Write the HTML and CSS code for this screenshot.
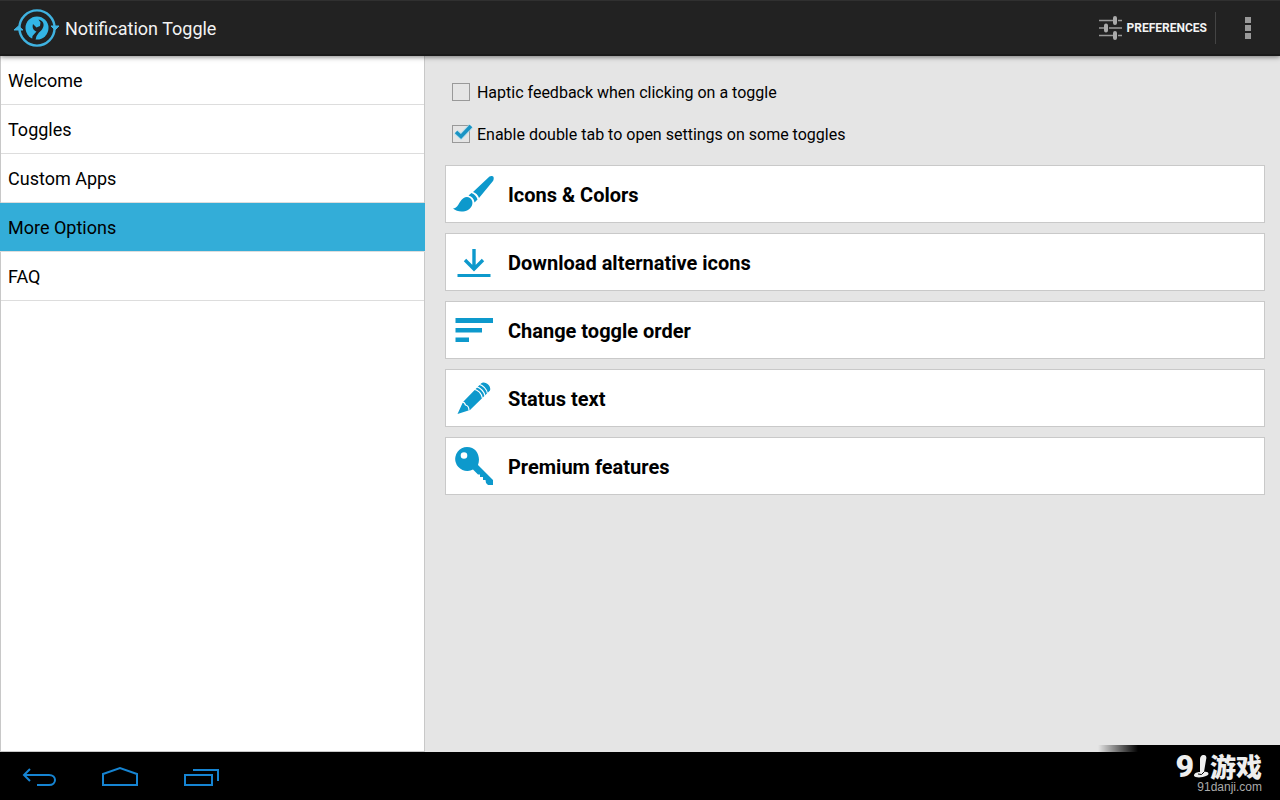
FILE: index.html
```html
<!DOCTYPE html>
<html lang="en">
<head>
<meta charset="utf-8">
<meta name="viewport" content="width=device-width, initial-scale=1">
<title>Notification Toggle</title>
<link rel="stylesheet" href="styles.css">
</head>
<body>
<header class="action-bar">
  <svg class="logo" viewBox="0 0 48 40" aria-hidden="true">
    <circle cx="24" cy="20" r="17.600" fill="none" stroke="#3fb2e0" stroke-width="2.400"/>
    <path d="M1 22L5.500 18L10 22ZM38 18H46L42 22Z" fill="#3fb2e0" stroke="#3fb2e0"/>
    <circle cx="24" cy="20" r="11.500" fill="#33b5e5"/>
    <path d="M19 32L19.500 28L23.500 23.500C20 22 19 19.500 20 16L23.500 19.500L27 18L27.500 14.500L25.500 11.500C30 12.500 31.500 16 30 19.500C29 22 27.500 23 26 24.500L23.500 28L22.500 32Z" fill="#222"/>
  </svg>
  <h1 class="title">Notification Toggle</h1>
  <button class="preferences" type="button">
    <svg class="sliders" viewBox="0 0 24 24" aria-hidden="true">
      <path d="M0 4.500H14M19 4.500H23M0 12H5M10 12H23M0 19.500H14M19 19.500H23" stroke="#999" stroke-width="1.300"/>
      <path d="M16 2V7M7 9.500V14.500M16 17V22" stroke="#aaa" stroke-width="4" stroke-linecap="round"/>
    </svg>
    <span>PREFERENCES</span>
  </button>
  <button class="overflow" type="button" aria-label="More">
    <svg class="dots" viewBox="0 0 6 22" aria-hidden="true"><path d="M0 0H6V6H0ZM0 8H6V14H0ZM0 16H6V22H0Z" fill="#999"/></svg>
  </button>
</header>

<div class="content">
  <nav class="sidebar">
    <a class="item" href="#welcome">Welcome</a>
    <a class="item" href="#toggles">Toggles</a>
    <a class="item" href="#apps">Custom Apps</a>
    <a class="item selected" href="#options" aria-current="page">More Options</a>
    <a class="item" href="#faq">FAQ</a>
  </nav>
  <main class="options">
    <div class="checks">
      <label class="check"><input class="box" type="checkbox"><span>Haptic feedback when clicking on a toggle</span></label>
      <label class="check"><input class="box" type="checkbox" checked><svg class="tick" viewBox="0 0 20 18" aria-hidden="true"><path d="M3 8L8 12.500L18 2" fill="none" stroke="#9cdcf0" stroke-width="5.500" opacity=".6"/><path d="M3 8L8 12.500L18 2" fill="none" stroke="#1a94c4" stroke-width="3.600"/></svg><span>Enable double tab to open settings on some toggles</span></label>
    </div>
    <div class="cards">
      <button class="card" type="button">
        <svg class="icon" viewBox="0 0 44 44" aria-hidden="true"><g fill="#0d99cc"><path d="M1 36.500C5 36 6 33 8 30C11 25 15 24 18 26C22 29 21 35 16 38C11 40.500 5 40 1 36.500Z"/><path d="M16.500 23.500L19.500 21C23 22.500 25 25 25.500 27.500L22.500 30.500C22 27 20 24.500 16.500 23.500Z"/><path d="M21 20L37.500 4.500C39 3.500 41 4 41.500 5C42 6.500 41.500 8 41 9L27 26C26 23 24 21 21 20Z"/></g></svg>
        <span class="label">Icons &amp; Colors</span>
      </button>
      <button class="card" type="button">
        <svg class="icon" viewBox="0 0 44 44" aria-hidden="true"><path d="M22 9V28M13 20L22 29L31 20" fill="none" stroke="#0d99cc" stroke-width="3.400"/><path d="M5.500 34H38.500V37H5.500Z" fill="#0d99cc"/></svg>
        <span class="label">Download alternative icons</span>
      </button>
      <button class="card" type="button">
        <svg class="icon" viewBox="0 0 44 44" aria-hidden="true"><path d="M3.500 10H41V15H3.500ZM3.500 20H30V24.500H3.500ZM3.500 29.500H17V34H3.500Z" fill="#0d99cc"/></svg>
        <span class="label">Change toggle order</span>
      </button>
      <button class="card" type="button">
        <svg class="icon" viewBox="0 0 44 44" aria-hidden="true"><path d="M5.500 38L11 26L29 7.500C32 4 40 9.500 38 14.500L18 34Z" fill="#0d99cc"/><path d="M10 26C12 26 13 27 13.500 29C15.500 29.500 17 31 17 34.500M21.500 13C26 14 29.500 17.500 30.500 22.500M24 10.500C28.500 12 32 15 33 20M26.500 8C31 9.500 34.500 12.500 35.500 17.500" fill="none" stroke="#fff" stroke-width="1.200"/></svg>
        <span class="label">Status text</span>
      </button>
      <button class="card" type="button">
        <svg class="icon" viewBox="0 0 44 44" aria-hidden="true"><path fill-rule="evenodd" d="M15 3A12 12 0 1 0 21 25.500L26 30.500H28V33H31V36H33.500L34 39L36 41H41V36L26 21C29 13 25 3 15 3ZM12 8.200A3.300 3.300 0 1 1 12 14.800A3.300 3.300 0 0 1 12 8.200Z" fill="#0d99cc"/></svg>
        <span class="label">Premium features</span>
      </button>
    </div>
  </main>
</div>

<footer class="system-bar">
  <button class="nav-button" type="button" aria-label="Back"><svg class="nav-icon" viewBox="0 0 40 24"><path d="M11 3L5 9L11 15M5 9H30C38 9 38 19 30 19H18"/></svg></button>
  <button class="nav-button" type="button" aria-label="Home"><svg class="nav-icon" viewBox="0 0 40 24"><path d="M3 19V8L20 2L37 8V19Z"/></svg></button>
  <button class="nav-button" type="button" aria-label="Recent apps"><svg class="nav-icon" viewBox="0 0 40 24"><path d="M4 9H31V19H4ZM12 4H37V15"/></svg></button>
  <div class="brand">
    <div class="brand-name"><span class="nine">9</span><svg class="pin" viewBox="0 0 16 24" aria-hidden="true"><path d="M10 1C12 1 13 3 12 6L10 18C15 17 16 21 12 22C8 24 -1 24 0 21C1 18 5 18 6 18L6 6C6 3 7 1 10 1Z" fill="#eee"/><path d="M4 20Q8 22 10 18" fill="none" stroke="#000"/></svg><span class="brand-cn" lang="zh">游戏</span></div>
    <div class="brand-url">91danji.com</div>
  </div>
</footer>
</body>
</html>
```
FILE: styles.css
```css
* { box-sizing: border-box; }

body {
  margin: 0;
  min-height: 100vh;
  display: flex;
  flex-direction: column;
  background: #e5e5e5;
  color: #000;
  font-family: Roboto, "Liberation Sans", sans-serif;
}

button {
  margin: 0;
  padding: 0;
  border: 0;
  background: none;
  color: inherit;
  font-family: inherit;
  cursor: pointer;
}

svg { display: block; flex: none; }

.action-bar {
  position: relative;
  display: flex;
  align-items: center;
  height: 56px;
  padding-left: 13px;
  background: #222;
  border-top: 1px solid #303030;
  border-bottom: 2px solid #1a1a1a;
  box-shadow: 0 1px 5px rgba(0, 0, 0, .5);
  color: #f3f3f3;
}

.logo { width: 48px; height: 40px; }

.title {
  margin: 0 auto 0 4px;
  padding-top: 2px;
  font-size: 18px;
  font-weight: 400;
}

.preferences {
  display: flex;
  align-items: center;
  gap: 4px;
  height: 32px;
  padding-right: 8px;
  border-right: 1px solid #444;
  font-size: 12px;
  font-weight: 700;
}

.sliders { width: 24px; height: 24px; }

.overflow {
  display: flex;
  justify-content: center;
  align-items: center;
  width: 64px;
  height: 48px;
}

.dots { width: 6px; height: 22px; }

.content {
  flex: 1;
  display: grid;
  grid-template-columns: 33.2% 1fr;
}

.sidebar {
  background: #fff;
  border: 1px solid #c8c8c8;
  border-top: 0;
}

.item {
  display: block;
  height: 49px;
  padding-left: 7px;
  border-bottom: 1px solid #ddd;
  color: #000;
  font-size: 18px;
  line-height: 49px;
  text-decoration: none;
}

.selected {
  margin: 0 -1px;
  padding-left: 8px;
  background: #33add8;
  background-clip: padding-box;
}

.options { padding: 15px 15px 0 20px; }

.checks { padding-left: 7px; }

.check {
  position: relative;
  display: flex;
  align-items: center;
  gap: 7px;
  height: 42px;
  font-size: 16px;
}

.box {
  appearance: none;
  width: 18px;
  height: 18px;
  margin: 0;
  border: 1px solid #999;
}

.tick {
  position: absolute;
  left: 1px;
  top: 11px;
  width: 20px;
  height: 18px;
}

.cards {
  display: flex;
  flex-direction: column;
  gap: 10px;
  margin-top: 10px;
}

.card {
  display: flex;
  align-items: center;
  gap: 12px;
  width: 100%;
  height: 58px;
  padding: 0 6px;
  border: 1px solid #c9c9c9;
  background: #fff;
  font-size: 20px;
  font-weight: 700;
  text-align: left;
}

.label { padding-top: 2px; }

.icon { width: 44px; height: 44px; }

.system-bar {
  position: relative;
  display: flex;
  align-items: center;
  gap: 41px;
  height: 48px;
  padding-left: 19px;
  background: #000;
}

.system-bar::before {
  content: "";
  position: absolute;
  right: 0;
  bottom: 100%;
  width: 182px;
  height: 7px;
  background: linear-gradient(to right, transparent, #000 40px);
}

.nav-button { padding-top: 4px; }

.nav-icon {
  width: 40px;
  height: 24px;
  fill: none;
  stroke: #1684d2;
  stroke-width: 2;
}

.brand {
  align-self: flex-start;
  margin-left: auto;
  padding-right: 18px;
  text-align: right;
}

.brand-name {
  display: flex;
  align-items: center;
  height: 28px;
  color: #eee;
}

.nine {
  font-size: 32px;
  font-weight: 900;
  line-height: 28px;
}

.pin { width: 16px; height: 24px; }

.brand-cn {
  font-family: "Noto Sans CJK SC", sans-serif;
  font-size: 26px;
  font-weight: 900;
  line-height: 24px;
}

.brand-url {
  color: #aaa;
  font-family: "Liberation Sans", Arial, sans-serif;
  font-size: 12px;
  line-height: 14px;
}
```
